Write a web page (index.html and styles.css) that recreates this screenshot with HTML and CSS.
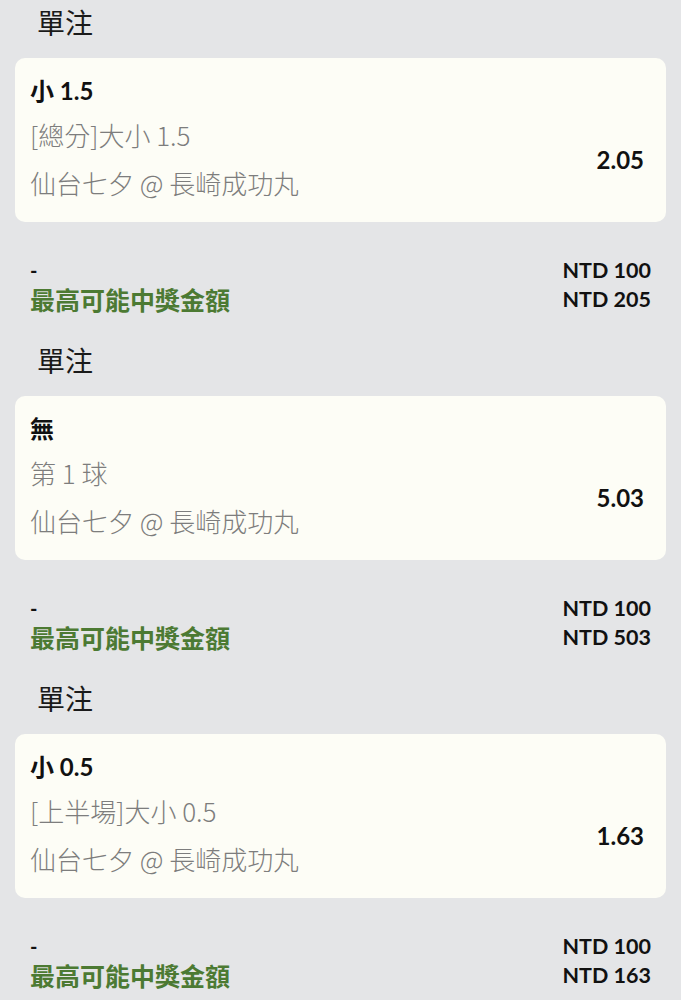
FILE: index.html
```html
<!DOCTYPE html>
<html lang="zh-Hant">
<head>
<meta charset="utf-8">
<link rel="stylesheet" href="styles.css">
</head>
<body>
<main class="list">
  <section class="bet">
    <h2 class="bet-type">單注</h2>
    <div class="card">
      <div class="pick">小 1.5</div>
      <div class="card-body">
        <div class="info">
          <div class="line">[總分]大小 1.5</div>
          <div class="line">仙台七夕 @ 長崎成功丸</div>
        </div>
        <div class="odds">2.05</div>
      </div>
    </div>
    <div class="summary">
      <div class="dash">-</div>
      <div class="amount">NTD 100</div>
      <div class="label">最高可能中獎金額</div>
      <div class="amount">NTD 205</div>
    </div>
  </section>
  <section class="bet">
    <h2 class="bet-type">單注</h2>
    <div class="card">
      <div class="pick">無</div>
      <div class="card-body">
        <div class="info">
          <div class="line">第 1 球</div>
          <div class="line">仙台七夕 @ 長崎成功丸</div>
        </div>
        <div class="odds">5.03</div>
      </div>
    </div>
    <div class="summary">
      <div class="dash">-</div>
      <div class="amount">NTD 100</div>
      <div class="label">最高可能中獎金額</div>
      <div class="amount">NTD 503</div>
    </div>
  </section>
  <section class="bet">
    <h2 class="bet-type">單注</h2>
    <div class="card">
      <div class="pick">小 0.5</div>
      <div class="card-body">
        <div class="info">
          <div class="line">[上半場]大小 0.5</div>
          <div class="line">仙台七夕 @ 長崎成功丸</div>
        </div>
        <div class="odds">1.63</div>
      </div>
    </div>
    <div class="summary">
      <div class="dash">-</div>
      <div class="amount">NTD 100</div>
      <div class="label">最高可能中獎金額</div>
      <div class="amount">NTD 163</div>
    </div>
  </section>
</main>
</body>
</html>
```
FILE: styles.css
```css
* { box-sizing: border-box; }
html, body {
  margin: 0;
  padding: 0;
  background: #e4e5e7;
}
body {
  font-family: Lato, "Noto Sans CJK TC", sans-serif;
  color: #111;
}
.list {
  padding-top: 2px;
  display: flex;
  flex-direction: column;
}
.bet {
  padding: 0 15px 26.5px 15px;
}
.bet-type {
  margin: 0 0 16px 0;
  padding-left: 22px;
  font-family: "Noto Sans CJK TC", sans-serif;
  font-weight: 400;
  font-size: 28px;
  line-height: 40px;
  color: #1a1a1a;
}
.card {
  background: #fdfdf6;
  border-radius: 10px;
  padding: 18px 22px 15px 15px;
  height: 164px;
}
.pick {
  font-weight: 700;
  font-size: 24px;
  line-height: 30px;
  color: #111;
}
.card-body {
  margin-top: 5px;
  display: flex;
  align-items: center;
  justify-content: space-between;
}
.line {
  font-family: "Noto Sans CJK TC", sans-serif;
  font-size: 26px;
  line-height: 48px;
  color: #7d7d7d;
  font-weight: 300;
}
.odds {
  font-weight: 700;
  font-size: 24px;
  color: #111;
}
.summary {
  margin-top: 33.5px;
  padding: 0 15px;
  display: grid;
  grid-template-columns: 1fr auto;
  grid-auto-rows: 29px;
  align-items: center;
}
.dash {
  font-weight: 700;
  font-size: 20px;
}
.amount {
  font-weight: 700;
  font-size: 21.5px;
  text-align: right;
  color: #111;
}
.label {
  font-weight: 700;
  font-size: 25px;
  color: #4c7a33;
  font-family: "Noto Sans CJK TC", sans-serif;
}
```
